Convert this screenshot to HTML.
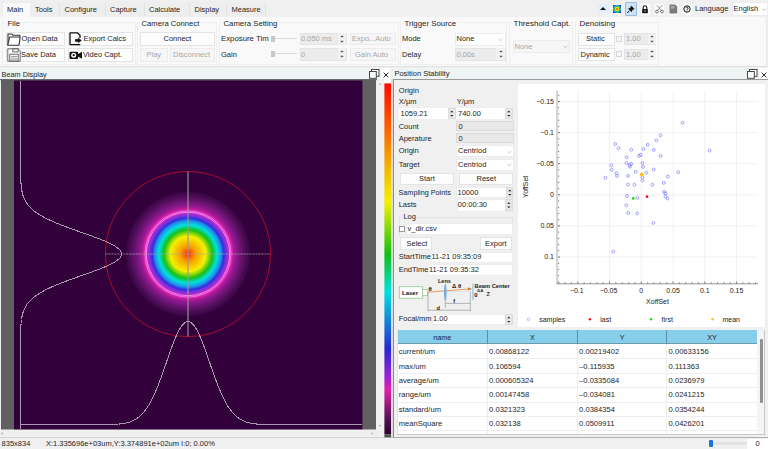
<!DOCTYPE html>
<html><head><meta charset="utf-8">
<style>
svg text{font-family:"Liberation Sans",sans-serif}
*{margin:0;padding:0;box-sizing:border-box}
html,body{width:768px;height:449px;overflow:hidden;background:#f0f0f0;font-family:"Liberation Sans",sans-serif;color:#1e1e1e}
.a{position:absolute}
.t{position:absolute;white-space:nowrap;line-height:10px;height:10px;font-size:7.5px;margin-top:-0.4px}
.btn{position:absolute;background:#fdfdfd;border:1px solid #e4e4e4}
.dis{color:#a8a8a8}
.grp{position:absolute;border:1px solid #efefef;background:#f9f9f9}
.spin{position:absolute;background:#ececec;border:1px solid #e4e4e4}
.inp{position:absolute;background:#fff;border:1px solid #e2e2e2}
.sb{position:absolute;right:0;top:0;bottom:0;width:8px;border-left:1px solid #e0e0e0;background:#f0f0f0}
</style></head><body>
<!-- tab bar -->
<div class="a" style="left:0;top:0;width:768px;height:17px;background:#f0f0f0"></div>
<div class="a" style="left:2px;top:2px;width:28.5px;height:16px;background:#f9f9f9;border:1px solid #ececec;border-bottom:none"></div>
<div class="a" style="left:30px;top:2px;width:236px;height:15px;background:#eeeeee"></div>
<div class="a" style="left:59px;top:3px;width:1px;height:13px;background:#e2e2e2"></div>
<div class="a" style="left:105px;top:3px;width:1px;height:13px;background:#e2e2e2"></div>
<div class="a" style="left:144px;top:3px;width:1px;height:13px;background:#e2e2e2"></div>
<div class="a" style="left:189px;top:3px;width:1px;height:13px;background:#e2e2e2"></div>
<div class="a" style="left:226px;top:3px;width:1px;height:13px;background:#e2e2e2"></div>
<div class="a" style="left:265px;top:3px;width:1px;height:13px;background:#e2e2e2"></div>
<div class="t" style="left:7px;top:5.5px">Main</div>
<div class="t" style="left:35px;top:5.5px">Tools</div>
<div class="t" style="left:64.5px;top:5.5px">Configure</div>
<div class="t" style="left:110px;top:5.5px">Capture</div>
<div class="t" style="left:149px;top:5.5px">Calculate</div>
<div class="t" style="left:194.5px;top:5.5px">Display</div>
<div class="t" style="left:231.5px;top:5.5px">Measure</div>

<!-- ribbon -->
<div class="a" style="left:0;top:17px;width:767px;height:50px;background:#f9f9f9;border-right:1px solid #e8e8e8;border-bottom:1px solid #e0e0e0"></div>

<!-- File group -->
<div class="grp" style="left:2px;top:22px;width:134px;height:43px"></div>
<div class="a" style="left:5px;top:19px;width:18px;height:8px;background:#f9f9f9"></div>
<div class="t" style="left:7.5px;top:19px;font-size:7.8px">File</div>
<div class="btn" style="left:5.5px;top:31.5px;width:59px;height:14.5px"></div>
<div class="btn" style="left:5.5px;top:47.5px;width:59px;height:14.5px"></div>
<div class="btn" style="left:67.5px;top:31.5px;width:65px;height:14.5px"></div>
<div class="btn" style="left:67.5px;top:47.5px;width:65px;height:14.5px"></div>
<svg class="a" style="left:6.5px;top:32.5px" width="14" height="13" viewBox="0 0 14 13">
<path d="M1 12 L1 1 L4.8 1 L5.8 2.2 L12.8 2.2 L12.8 3.8" fill="none" stroke="#333" stroke-width="1.1" stroke-linejoin="round"/>
<path d="M0.8 12.2 L2.6 4 L13.2 4 L12 12.2 Z" fill="#fff" stroke="#333" stroke-width="1.1" stroke-linejoin="round"/>
</svg>
<svg class="a" style="left:6.5px;top:47.5px" width="14" height="14" viewBox="0 0 14 14">
<path d="M0.8 0.8 L11.2 0.8 L13.2 2.8 L13.2 13.2 L0.8 13.2 Z" fill="#fff" stroke="#6a6a6a" stroke-width="1"/>
<rect x="5.8" y="0.8" width="5.4" height="3" fill="none" stroke="#6a6a6a" stroke-width="1"/>
<rect x="2.8" y="6.2" width="8.4" height="7" fill="none" stroke="#6a6a6a" stroke-width="1"/>
<rect x="3.8" y="8" width="6.4" height="1.3" fill="#a0a0a0"/>
<rect x="3.8" y="10.4" width="6.4" height="1.3" fill="#a0a0a0"/>
</svg>
<div class="t" style="left:21.5px;top:34.7px">Open Data</div>
<div class="t" style="left:21px;top:50.3px">Save Data</div>
<svg class="a" style="left:68.5px;top:32px" width="14" height="14" viewBox="0 0 14 14">
<path d="M11 6 L11 3.3 L8.3 0.8 L1.6 0.8 Q1 0.8 1 1.4 L1 12 Q1 12.6 1.6 12.6 L11.3 12.6" fill="none" stroke="#111" stroke-width="1.3" stroke-linejoin="round"/>
<path d="M6.3 7.3 L9.3 7.3 L9.3 6 L12.4 8.4 L9.3 10.8 L9.3 9.5 L6.3 9.5 Z" fill="#111" stroke="#111" stroke-width="0.5"/>
</svg>
<svg class="a" style="left:68.5px;top:50.5px" width="14" height="9" viewBox="0 0 14 9">
<rect x="0.5" y="0.7" width="8.6" height="7.2" rx="1" fill="#111"/>
<path d="M8.8 3.2 L13 0.8 L13 7.8 L8.8 5.4 Z" fill="#111"/>
<circle cx="4.7" cy="4.2" r="2.5" fill="#fff"/>
<circle cx="4.7" cy="4.2" r="1.1" fill="#111"/>
</svg>
<div class="t" style="left:83.5px;top:34.7px">Export Calcs</div>
<div class="t" style="left:83px;top:50.3px">Video Capt.</div>

<!-- Camera Connect -->
<div class="grp" style="left:137px;top:22px;width:80px;height:43px"></div>
<div class="a" style="left:139px;top:19px;width:62px;height:8px;background:#f9f9f9"></div>
<div class="t" style="left:141.5px;top:19px;font-size:7.65px">Camera Connect</div>
<div class="btn" style="left:139.5px;top:31.5px;width:75px;height:14px"></div>
<div class="t" style="left:163.5px;top:34.7px">Connect</div>
<div class="btn" style="left:139.5px;top:47.5px;width:28.5px;height:14.5px;background:#f6f6f6;border-color:#ececec"></div>
<div class="btn" style="left:169.5px;top:47.5px;width:45px;height:14.5px;background:#f6f6f6;border-color:#ececec"></div>
<div class="t dis" style="left:146.5px;top:50.3px">Play</div>
<div class="t dis" style="left:173px;top:50.3px">Disconnect</div>

<!-- Camera Setting -->
<div class="grp" style="left:219px;top:22px;width:180px;height:43px"></div>
<div class="a" style="left:221px;top:19px;width:58px;height:8px;background:#f9f9f9"></div>
<div class="t" style="left:223.5px;top:19px;font-size:7.75px">Camera Setting</div>
<div class="t" style="left:221px;top:34.4px;font-size:7.8px">Exposure Tim</div>
<div class="t" style="left:221px;top:50.3px">Gain</div>
<div class="a" style="left:275px;top:38px;width:22px;height:1px;background:#dadada"></div>
<div class="a" style="left:270.5px;top:35.5px;width:4.5px;height:6.5px;background:#c8c8c8"></div>
<div class="a" style="left:275px;top:53px;width:22px;height:1px;background:#dadada"></div>
<div class="a" style="left:270.5px;top:50.5px;width:4.5px;height:6.5px;background:#c8c8c8"></div>
<div class="spin" style="left:299.5px;top:32.5px;width:47px;height:12.5px"></div>
<div class="a" style="left:338px;top:33px;width:8px;height:11.5px;background:#f2f2f2"></div>
<div class="spin" style="left:299.5px;top:47.5px;width:47px;height:13px"></div>
<div class="a" style="left:338px;top:48px;width:8px;height:12px;background:#f2f2f2"></div>
<div class="t dis" style="left:301px;top:34.7px">0.050 ms</div>
<div class="t dis" style="left:301px;top:50.3px">0</div>
<div class="btn" style="left:349.5px;top:32.5px;width:46.5px;height:12.5px;background:#f6f6f6;border-color:#ececec"></div>
<div class="btn" style="left:349.5px;top:47.5px;width:46.5px;height:13px;background:#f6f6f6;border-color:#ececec"></div>
<div class="t dis" style="left:352px;top:34.7px">Expo...Auto</div>
<div class="t dis" style="left:355px;top:50.3px">Gain Auto</div>

<!-- Trigger Source -->
<div class="grp" style="left:400px;top:22px;width:107px;height:43px"></div>
<div class="a" style="left:402px;top:19px;width:58px;height:8px;background:#f9f9f9"></div>
<div class="t" style="left:404.5px;top:19px;font-size:7.85px">Trigger Source</div>
<div class="t" style="left:402px;top:34.7px">Mode</div>
<div class="t" style="left:402px;top:50.3px">Delay</div>
<div class="inp" style="left:454.5px;top:32.5px;width:51px;height:13px;border-color:#ececec"></div>
<div class="t" style="left:456.5px;top:34.7px">None</div>
<div class="spin" style="left:454.5px;top:47.5px;width:51px;height:13px"></div>
<div class="a" style="left:496px;top:48px;width:9px;height:12px;background:#f2f2f2"></div>
<div class="t dis" style="left:456.5px;top:50.3px">0.00s</div>

<!-- Threshold Capt -->
<div class="grp" style="left:508.5px;top:22px;width:64px;height:43px"></div>
<div class="a" style="left:511px;top:19px;width:60px;height:8px;background:#f9f9f9"></div>
<div class="t" style="left:513.5px;top:19px;font-size:8.0px">Threshold Capt.</div>
<div class="btn" style="left:512.5px;top:40px;width:57px;height:13px;background:#f6f6f6;border-color:#ececec"></div>
<div class="t dis" style="left:514.5px;top:42.2px">None</div>

<!-- Denoising -->
<div class="grp" style="left:574.5px;top:22px;width:84.5px;height:43px"></div>
<div class="a" style="left:577px;top:19px;width:40px;height:8px;background:#f9f9f9"></div>
<div class="t" style="left:579.5px;top:19px;font-size:8.0px">Denoising</div>
<div class="btn" style="left:577.5px;top:32.5px;width:37px;height:13px"></div>
<div class="btn" style="left:577.5px;top:47.5px;width:37px;height:13px"></div>
<div class="t" style="left:586px;top:34.7px">Static</div>
<div class="t" style="left:580.5px;top:50.3px">Dynamic</div>
<div class="a" style="left:616px;top:36px;width:6px;height:6px;border:1px solid #d8d8d8;background:#f6f6f6"></div>
<div class="a" style="left:616px;top:51px;width:6px;height:6px;border:1px solid #d8d8d8;background:#f6f6f6"></div>
<div class="spin" style="left:624px;top:33px;width:32px;height:11.5px"></div>
<div class="spin" style="left:624px;top:48.5px;width:32px;height:11.5px"></div>
<div class="a" style="left:648px;top:33.5px;width:7.5px;height:10.5px;background:#f2f2f2"></div>
<div class="a" style="left:648px;top:49px;width:7.5px;height:10.5px;background:#f2f2f2"></div>
<div class="t dis" style="left:626px;top:34.7px">1.00</div>
<div class="t dis" style="left:626px;top:50.3px">1.00</div>

<!-- tab row icons -->
<div class="a" style="left:597.5px;top:3.8px;width:11.2px;height:9.6px;background:#e3eefa"></div>
<div class="a" style="left:600px;top:6.6px;width:0;height:0;border-left:3.2px solid transparent;border-right:3.2px solid transparent;border-bottom:3.4px solid #111"></div>
<div class="a" style="left:612px;top:2.5px;width:10px;height:13px;background:#fdfdfd;border:1px solid #f0f0f0"></div>
<div class="a" style="left:613.3px;top:5.3px;width:7.5px;height:7.5px;background:radial-gradient(circle at 50% 50%,#ff4000 0,#ff9000 18%,#e8e800 30%,#40c040 45%,#20c0e0 60%,#2050e0 75%,#1830c8 100%)"></div>
<div class="a" style="left:625px;top:2px;width:11.7px;height:13.5px;background:#cfe3f7;border:1px solid #94bce2;border-radius:1px"></div>
<svg class="a" style="left:626px;top:4px" width="10" height="10" viewBox="0 0 10 10"><path d="M5.2 1.6 L8.6 5 L7.4 5.4 L6 6.8 L5.8 8.2 L2 4.4 L3.4 4.2 L4.8 2.8 Z" fill="#1a1a1a"/><path d="M1.2 9 L3.8 6.4" stroke="#1a1a1a" stroke-width="1"/></svg>
<div class="a" style="left:639.5px;top:2.5px;width:11px;height:13px;background:#fdfdfd;border:1px solid #f0f0f0"></div>
<svg class="a" style="left:641px;top:4.5px" width="8" height="9" viewBox="0 0 8 9"><path d="M2.2 4 L2.2 2.6 A1.8 1.8 0 0 1 5.8 2.6 L5.8 4" fill="none" stroke="#111" stroke-width="1.1"/><rect x="1.2" y="4" width="5.6" height="4.2" fill="#111"/><rect x="3.6" y="5.3" width="0.8" height="1.6" fill="#fff"/></svg>
<div class="a" style="left:653.5px;top:2.5px;width:11px;height:13px;background:#fdfdfd;border:1px solid #f0f0f0"></div>
<svg class="a" style="left:654.5px;top:4px" width="9" height="10" viewBox="0 0 9 10"><path d="M1.8 1.2 L6.8 6.6 M7.2 1.2 L2.2 6.6" stroke="#888" stroke-width="0.9"/><circle cx="2" cy="7.6" r="1.4" fill="none" stroke="#666" stroke-width="0.9"/><circle cx="7" cy="7.6" r="1.4" fill="none" stroke="#666" stroke-width="0.9"/></svg>
<div class="a" style="left:667.5px;top:2.5px;width:11px;height:13px;background:#fdfdfd;border:1px solid #f0f0f0"></div>
<svg class="a" style="left:669px;top:4px" width="9" height="10" viewBox="0 0 9 10"><path d="M0.5 0.5 L6.3 0.5 L8.2 2.4 L8.2 9.6 L0.5 9.6 Z" fill="#7a7a7a"/><path d="M2 2 L5.5 2 L5.5 4.6 L2 4.6 Z" fill="#a8a8a8"/></svg>
<div class="a" style="left:681.5px;top:2.5px;width:11px;height:13px;background:#fdfdfd;border:1px solid #f0f0f0"></div>
<svg class="a" style="left:682.8px;top:5.2px" width="8" height="8" viewBox="0 0 8 8"><circle cx="4" cy="4" r="3.2" fill="none" stroke="#111" stroke-width="1"/><path d="M2.9 3.2 A1.1 1.1 0 1 1 4 4.3 L4 4.9" fill="none" stroke="#111" stroke-width="0.8"/><rect x="3.6" y="5.5" width="0.8" height="0.8" fill="#111"/></svg>
<div class="t" style="left:695px;top:4.6px">Language</div>
<div class="inp" style="left:731.5px;top:2px;width:36px;height:14px;border-color:#ececec"></div>
<div class="t" style="left:733.5px;top:4.6px">English</div>
<svg class="a" style="left:762px;top:8px" width="4" height="3" viewBox="0 0 4 3"><path d="M0.3 0.5 L2 2.3 L3.7 0.5" fill="none" stroke="#999" stroke-width="0.6"/></svg>

<!-- Beam display dock -->
<div class="a" style="left:0;top:68px;width:392px;height:11px;background:#eef4f4"></div>
<div class="t" style="left:1.6px;top:69.9px;font-size:7.3px">Beam Display</div>
<svg class="a" style="left:369px;top:69px" width="11" height="10" viewBox="0 0 11 10">
<rect x="2.5" y="0.5" width="7.5" height="6.8" fill="#fff" stroke="#444" stroke-width="1"/>
<rect x="0.5" y="2.5" width="6.8" height="6.8" fill="#fff" stroke="#444" stroke-width="1"/>
</svg>
<div class="a" style="left:380.5px;top:68.3px;width:9.5px;height:10.5px;background:#fff"></div>
<svg class="a" style="left:382.5px;top:71.5px" width="6" height="6" viewBox="0 0 6 6"><path d="M0.6 0.6 L5.4 5.4 M5.4 0.6 L0.6 5.4" stroke="#111" stroke-width="0.9"/></svg>
<svg class="a" style="left:0;top:79px" width="393" height="359" viewBox="0 79 393 359">
<defs>
<linearGradient id="cb" x1="0" y1="83.4" x2="0" y2="434.4" gradientUnits="userSpaceOnUse">
<stop offset="0" stop-color="#ff0800"/>
<stop offset="0.105" stop-color="#ff5000"/>
<stop offset="0.245" stop-color="#f2b800"/>
<stop offset="0.338" stop-color="#f6f000"/>
<stop offset="0.486" stop-color="#10c010"/>
<stop offset="0.594" stop-color="#00e0e0"/>
<stop offset="0.757" stop-color="#2828d0"/>
<stop offset="0.839" stop-color="#a020d8"/>
<stop offset="0.873" stop-color="#e020a8"/>
<stop offset="0.957" stop-color="#501050"/>
<stop offset="1" stop-color="#2c002c"/>
</linearGradient>
<radialGradient id="beam" cx="188" cy="254" r="62" gradientUnits="userSpaceOnUse">
<stop offset="0" stop-color="#ff2800"/>
<stop offset="0.126" stop-color="#f8a000"/>
<stop offset="0.284" stop-color="#f6f000"/>
<stop offset="0.39" stop-color="#18c018"/>
<stop offset="0.47" stop-color="#00e0e0"/>
<stop offset="0.535" stop-color="#2090e8"/>
<stop offset="0.577" stop-color="#3030e0"/>
<stop offset="0.63" stop-color="#9030d8"/>
<stop offset="0.672" stop-color="#d020c0"/>
<stop offset="0.70" stop-color="#e028c0"/>
<stop offset="0.742" stop-color="#b01890"/>
<stop offset="0.774" stop-color="#901a90"/>
<stop offset="0.84" stop-color="#701478"/>
<stop offset="0.90" stop-color="#581060"/>
<stop offset="0.95" stop-color="#460a50"/>
<stop offset="1" stop-color="#3c0646"/>
</radialGradient>
</defs>
<rect x="0" y="79" width="393" height="359" fill="#f0f0f0"/>
<rect x="0" y="79" width="377" height="1.2" fill="#6a6a6a"/>
<rect x="1" y="80" width="375" height="349.5" fill="#606060"/>
<rect x="14" y="80.5" width="348.4" height="348.8" fill="#32003a"/>
<circle cx="188" cy="254" r="62" fill="url(#beam)"/>
<circle cx="188" cy="254" r="41.7" fill="none" stroke="#ffb8ff" stroke-width="0.7"/>
<circle cx="188" cy="254" r="43" fill="none" stroke="#ffa8f0" stroke-width="0.6"/>
<circle cx="188" cy="254" r="82.5" fill="none" stroke="#b0102c" stroke-width="0.9"/>
<line x1="188" y1="171.5" x2="188" y2="336.5" stroke="#9a9a9a" stroke-opacity="0.85" stroke-width="1.3"/>
<line x1="105.5" y1="254" x2="270.5" y2="254" stroke="#a8a8a8" stroke-opacity="0.85" stroke-width="0.9" stroke-dasharray="2,1"/>
<path d="M20.5,80.5 L20.5,81.5 L20.5,82.5 L20.5,83.5 L20.5,84.5 L20.5,85.5 L20.5,86.5 L20.5,87.5 L20.5,88.5 L20.5,89.5 L20.5,90.5 L20.5,91.5 L20.5,92.5 L20.5,93.5 L20.5,94.5 L20.5,95.5 L20.5,96.5 L20.5,97.5 L20.5,98.5 L20.5,99.5 L20.5,100.5 L20.5,101.5 L20.5,102.5 L20.5,103.5 L20.5,104.5 L20.5,105.5 L20.5,106.5 L20.5,107.5 L20.5,108.5 L20.5,109.5 L20.5,110.5 L20.5,111.5 L20.5,112.5 L20.5,113.5 L20.5,114.5 L20.5,115.5 L20.5,116.5 L20.5,117.5 L20.5,118.5 L20.5,119.5 L20.5,120.5 L20.5,121.5 L20.5,122.5 L20.5,123.5 L20.5,124.5 L20.5,125.5 L20.5,126.5 L20.5,127.5 L20.5,128.5 L20.5,129.5 L20.5,130.5 L20.5,131.5 L20.5,132.5 L20.5,133.5 L20.5,134.5 L20.5,135.5 L20.5,136.5 L20.5,137.5 L20.5,138.5 L20.5,139.5 L20.5,140.5 L20.5,141.5 L20.5,142.5 L20.5,143.5 L20.5,144.5 L20.5,145.5 L20.5,146.5 L20.5,147.5 L20.5,148.5 L20.5,149.5 L20.5,150.5 L20.5,151.5 L20.5,152.5 L20.5,153.5 L20.5,154.5 L20.5,155.5 L20.5,156.5 L20.5,157.5 L20.5,158.5 L20.5,159.5 L20.5,160.5 L20.5,161.5 L20.5,162.5 L20.5,163.5 L20.5,164.5 L20.5,165.5 L20.5,166.5 L20.5,167.5 L20.5,168.5 L20.5,169.5 L20.6,170.5 L20.6,171.5 L20.6,172.5 L20.6,173.5 L20.6,174.5 L20.6,175.5 L20.7,176.5 L20.7,177.5 L20.7,178.5 L20.7,179.5 L20.8,180.5 L20.8,181.5 L20.9,182.5 L21.0,183.5 L21.0,184.5 L21.1,185.5 L21.2,186.5 L21.3,187.5 L21.5,188.5 L21.6,189.5 L21.8,190.5 L22.0,191.5 L22.2,192.5 L22.4,193.5 L22.7,194.5 L23.0,195.5 L23.3,196.5 L23.7,197.5 L24.1,198.5 L24.6,199.5 L25.1,200.5 L25.6,201.5 L26.2,202.5 L26.9,203.5 L27.6,204.5 L28.4,205.5 L29.3,206.5 L30.2,207.5 L31.3,208.5 L32.4,209.5 L33.5,210.5 L34.8,211.5 L36.2,212.5 L37.6,213.5 L39.2,214.5 L40.8,215.5 L42.6,216.5 L44.4,217.5 L46.3,218.5 L48.4,219.5 L50.5,220.5 L52.7,221.5 L55.0,222.5 L57.4,223.5 L59.9,224.5 L62.5,225.5 L65.1,226.5 L67.8,227.5 L70.5,228.5 L73.3,229.5 L76.1,230.5 L78.9,231.5 L81.8,232.5 L84.6,233.5 L87.4,234.5 L90.3,235.5 L93.0,236.5 L95.7,237.5 L98.4,238.5 L101.0,239.5 L103.4,240.5 L105.8,241.5 L108.0,242.5 L110.1,243.5 L112.1,244.5 L113.9,245.5 L115.5,246.5 L117.0,247.5 L118.2,248.5 L119.3,249.5 L120.2,250.5 L120.8,251.5 L121.3,252.5 L121.5,253.5 L121.5,254.5 L121.3,255.5 L120.8,256.5 L120.2,257.5 L119.3,258.5 L118.2,259.5 L117.0,260.5 L115.5,261.5 L113.9,262.5 L112.1,263.5 L110.1,264.5 L108.0,265.5 L105.8,266.5 L103.4,267.5 L101.0,268.5 L98.4,269.5 L95.7,270.5 L93.0,271.5 L90.3,272.5 L87.4,273.5 L84.6,274.5 L81.8,275.5 L78.9,276.5 L76.1,277.5 L73.3,278.5 L70.5,279.5 L67.8,280.5 L65.1,281.5 L62.5,282.5 L59.9,283.5 L57.4,284.5 L55.0,285.5 L52.7,286.5 L50.5,287.5 L48.4,288.5 L46.3,289.5 L44.4,290.5 L42.6,291.5 L40.8,292.5 L39.2,293.5 L37.6,294.5 L36.2,295.5 L34.8,296.5 L33.5,297.5 L32.4,298.5 L31.3,299.5 L30.2,300.5 L29.3,301.5 L28.4,302.5 L27.6,303.5 L26.9,304.5 L26.2,305.5 L25.6,306.5 L25.1,307.5 L24.6,308.5 L24.1,309.5 L23.7,310.5 L23.3,311.5 L23.0,312.5 L22.7,313.5 L22.4,314.5 L22.2,315.5 L22.0,316.5 L21.8,317.5 L21.6,318.5 L21.5,319.5 L21.3,320.5 L21.2,321.5 L21.1,322.5 L21.0,323.5 L21.0,324.5 L20.9,325.5 L20.8,326.5 L20.8,327.5 L20.7,328.5 L20.7,329.5 L20.7,330.5 L20.7,331.5 L20.6,332.5 L20.6,333.5 L20.6,334.5 L20.6,335.5 L20.6,336.5 L20.6,337.5 L20.5,338.5 L20.5,339.5 L20.5,340.5 L20.5,341.5 L20.5,342.5 L20.5,343.5 L20.5,344.5 L20.5,345.5 L20.5,346.5 L20.5,347.5 L20.5,348.5 L20.5,349.5 L20.5,350.5 L20.5,351.5 L20.5,352.5 L20.5,353.5 L20.5,354.5 L20.5,355.5 L20.5,356.5 L20.5,357.5 L20.5,358.5 L20.5,359.5 L20.5,360.5 L20.5,361.5 L20.5,362.5 L20.5,363.5 L20.5,364.5 L20.5,365.5 L20.5,366.5 L20.5,367.5 L20.5,368.5 L20.5,369.5 L20.5,370.5 L20.5,371.5 L20.5,372.5 L20.5,373.5 L20.5,374.5 L20.5,375.5 L20.5,376.5 L20.5,377.5 L20.5,378.5 L20.5,379.5 L20.5,380.5 L20.5,381.5 L20.5,382.5 L20.5,383.5 L20.5,384.5 L20.5,385.5 L20.5,386.5 L20.5,387.5 L20.5,388.5 L20.5,389.5 L20.5,390.5 L20.5,391.5 L20.5,392.5 L20.5,393.5 L20.5,394.5 L20.5,395.5 L20.5,396.5 L20.5,397.5 L20.5,398.5 L20.5,399.5 L20.5,400.5 L20.5,401.5 L20.5,402.5 L20.5,403.5 L20.5,404.5 L20.5,405.5 L20.5,406.5 L20.5,407.5 L20.5,408.5 L20.5,409.5 L20.5,410.5 L20.5,411.5 L20.5,412.5 L20.5,413.5 L20.5,414.5 L20.5,415.5 L20.5,416.5 L20.5,417.5 L20.5,418.5 L20.5,419.5 L20.5,420.5 L20.5,421.5 L20.5,422.5 L20.5,423.5 L20.5,424.5 L20.5,425.5 L20.5,426.5 L20.5,427.5 L20.5,428.5" fill="none" stroke="#a898b0" stroke-width="1" shape-rendering="crispEdges"/>
<path d="M20.5,424.6 L21.5,424.6 L22.5,424.6 L23.5,424.6 L24.5,424.6 L25.5,424.6 L26.5,424.6 L27.5,424.6 L28.5,424.6 L29.5,424.6 L30.5,424.6 L31.5,424.6 L32.5,424.6 L33.5,424.6 L34.5,424.6 L35.5,424.6 L36.5,424.6 L37.5,424.6 L38.5,424.6 L39.5,424.6 L40.5,424.6 L41.5,424.6 L42.5,424.6 L43.5,424.6 L44.5,424.6 L45.5,424.6 L46.5,424.6 L47.5,424.6 L48.5,424.6 L49.5,424.6 L50.5,424.6 L51.5,424.6 L52.5,424.6 L53.5,424.6 L54.5,424.6 L55.5,424.6 L56.5,424.6 L57.5,424.6 L58.5,424.6 L59.5,424.6 L60.5,424.6 L61.5,424.6 L62.5,424.6 L63.5,424.6 L64.5,424.6 L65.5,424.6 L66.5,424.6 L67.5,424.6 L68.5,424.6 L69.5,424.6 L70.5,424.6 L71.5,424.6 L72.5,424.6 L73.5,424.6 L74.5,424.6 L75.5,424.6 L76.5,424.6 L77.5,424.6 L78.5,424.6 L79.5,424.6 L80.5,424.6 L81.5,424.6 L82.5,424.6 L83.5,424.6 L84.5,424.6 L85.5,424.6 L86.5,424.6 L87.5,424.6 L88.5,424.6 L89.5,424.6 L90.5,424.6 L91.5,424.6 L92.5,424.6 L93.5,424.6 L94.5,424.6 L95.5,424.6 L96.5,424.6 L97.5,424.6 L98.5,424.6 L99.5,424.6 L100.5,424.6 L101.5,424.6 L102.5,424.6 L103.5,424.6 L104.5,424.5 L105.5,424.5 L106.5,424.5 L107.5,424.5 L108.5,424.5 L109.5,424.5 L110.5,424.4 L111.5,424.4 L112.5,424.4 L113.5,424.3 L114.5,424.3 L115.5,424.3 L116.5,424.2 L117.5,424.1 L118.5,424.0 L119.5,424.0 L120.5,423.9 L121.5,423.7 L122.5,423.6 L123.5,423.5 L124.5,423.3 L125.5,423.1 L126.5,422.9 L127.5,422.6 L128.5,422.4 L129.5,422.1 L130.5,421.7 L131.5,421.3 L132.5,420.9 L133.5,420.5 L134.5,419.9 L135.5,419.4 L136.5,418.8 L137.5,418.1 L138.5,417.3 L139.5,416.5 L140.5,415.6 L141.5,414.7 L142.5,413.6 L143.5,412.5 L144.5,411.3 L145.5,410.0 L146.5,408.6 L147.5,407.1 L148.5,405.6 L149.5,403.9 L150.5,402.1 L151.5,400.2 L152.5,398.2 L153.5,396.2 L154.5,394.0 L155.5,391.7 L156.5,389.4 L157.5,386.9 L158.5,384.4 L159.5,381.8 L160.5,379.1 L161.5,376.4 L162.5,373.6 L163.5,370.8 L164.5,367.9 L165.5,365.0 L166.5,362.1 L167.5,359.2 L168.5,356.3 L169.5,353.5 L170.5,350.6 L171.5,347.9 L172.5,345.2 L173.5,342.6 L174.5,340.0 L175.5,337.6 L176.5,335.3 L177.5,333.2 L178.5,331.2 L179.5,329.3 L180.5,327.7 L181.5,326.2 L182.5,324.9 L183.5,323.8 L184.5,323.0 L185.5,322.3 L186.5,321.9 L187.5,321.6 L188.5,321.6 L189.5,321.9 L190.5,322.3 L191.5,323.0 L192.5,323.8 L193.5,324.9 L194.5,326.2 L195.5,327.7 L196.5,329.3 L197.5,331.2 L198.5,333.2 L199.5,335.3 L200.5,337.6 L201.5,340.0 L202.5,342.6 L203.5,345.2 L204.5,347.9 L205.5,350.6 L206.5,353.5 L207.5,356.3 L208.5,359.2 L209.5,362.1 L210.5,365.0 L211.5,367.9 L212.5,370.8 L213.5,373.6 L214.5,376.4 L215.5,379.1 L216.5,381.8 L217.5,384.4 L218.5,386.9 L219.5,389.4 L220.5,391.7 L221.5,394.0 L222.5,396.2 L223.5,398.2 L224.5,400.2 L225.5,402.1 L226.5,403.9 L227.5,405.6 L228.5,407.1 L229.5,408.6 L230.5,410.0 L231.5,411.3 L232.5,412.5 L233.5,413.6 L234.5,414.7 L235.5,415.6 L236.5,416.5 L237.5,417.3 L238.5,418.1 L239.5,418.8 L240.5,419.4 L241.5,419.9 L242.5,420.5 L243.5,420.9 L244.5,421.3 L245.5,421.7 L246.5,422.1 L247.5,422.4 L248.5,422.6 L249.5,422.9 L250.5,423.1 L251.5,423.3 L252.5,423.5 L253.5,423.6 L254.5,423.7 L255.5,423.9 L256.5,424.0 L257.5,424.0 L258.5,424.1 L259.5,424.2 L260.5,424.3 L261.5,424.3 L262.5,424.3 L263.5,424.4 L264.5,424.4 L265.5,424.4 L266.5,424.5 L267.5,424.5 L268.5,424.5 L269.5,424.5 L270.5,424.5 L271.5,424.5 L272.5,424.6 L273.5,424.6 L274.5,424.6 L275.5,424.6 L276.5,424.6 L277.5,424.6 L278.5,424.6 L279.5,424.6 L280.5,424.6 L281.5,424.6 L282.5,424.6 L283.5,424.6 L284.5,424.6 L285.5,424.6 L286.5,424.6 L287.5,424.6 L288.5,424.6 L289.5,424.6 L290.5,424.6 L291.5,424.6 L292.5,424.6 L293.5,424.6 L294.5,424.6 L295.5,424.6 L296.5,424.6 L297.5,424.6 L298.5,424.6 L299.5,424.6 L300.5,424.6 L301.5,424.6 L302.5,424.6 L303.5,424.6 L304.5,424.6 L305.5,424.6 L306.5,424.6 L307.5,424.6 L308.5,424.6 L309.5,424.6 L310.5,424.6 L311.5,424.6 L312.5,424.6 L313.5,424.6 L314.5,424.6 L315.5,424.6 L316.5,424.6 L317.5,424.6 L318.5,424.6 L319.5,424.6 L320.5,424.6 L321.5,424.6 L322.5,424.6 L323.5,424.6 L324.5,424.6 L325.5,424.6 L326.5,424.6 L327.5,424.6 L328.5,424.6 L329.5,424.6 L330.5,424.6 L331.5,424.6 L332.5,424.6 L333.5,424.6 L334.5,424.6 L335.5,424.6 L336.5,424.6 L337.5,424.6 L338.5,424.6 L339.5,424.6 L340.5,424.6 L341.5,424.6 L342.5,424.6 L343.5,424.6 L344.5,424.6 L345.5,424.6 L346.5,424.6 L347.5,424.6 L348.5,424.6 L349.5,424.6 L350.5,424.6 L351.5,424.6 L352.5,424.6 L353.5,424.6 L354.5,424.6 L355.5,424.6 L356.5,424.6 L357.5,424.6 L358.5,424.6 L359.5,424.6 L360.5,424.6 L361.5,424.6" fill="none" stroke="#a898b0" stroke-width="1" shape-rendering="crispEdges"/>
<path d="M376 429.5 L376 437.5" stroke="#e4e4e4"/>
<path d="M378.6 84.6 L380 83.2 L381.4 84.6 Z" fill="#999"/>
<path d="M378.6 425.2 L380 426.6 L381.4 425.2 Z" fill="#999"/>
<path d="M2.6 432 L1.2 433.4 L2.6 434.8 Z" fill="#999"/>
<path d="M371.6 432 L373 433.4 L371.6 434.8 Z" fill="#999"/>
<rect x="384" y="79.7" width="7" height="3.7" fill="#fff"/>
<rect x="384.4" y="83.4" width="6.6" height="351" fill="url(#cb)"/>
<rect x="384.4" y="434.4" width="6.6" height="3.3" fill="#505050"/>
<rect x="391" y="79" width="2" height="359" fill="#dcdcdc"/>
<rect x="0" y="437.5" width="393" height="0.8" fill="#b8b8b8"/>
</svg>

<!-- Position Stability dock -->
<div class="a" style="left:393.4px;top:68px;width:374.6px;height:11px;background:#eef4f4"></div>
<div class="t" style="left:394.4px;top:69.8px">Position Stability</div>
<svg class="a" style="left:747px;top:69px" width="11" height="10" viewBox="0 0 11 10">
<rect x="2.5" y="0.5" width="7.5" height="6.8" fill="#fff" stroke="#444" stroke-width="1"/>
<rect x="0.5" y="2.5" width="6.8" height="6.8" fill="#fff" stroke="#444" stroke-width="1"/>
</svg>
<div class="a" style="left:758.5px;top:68.3px;width:9.5px;height:10.5px;background:#fff"></div>
<svg class="a" style="left:760.5px;top:71.5px" width="6" height="6" viewBox="0 0 6 6"><path d="M0.6 0.6 L5.4 5.4 M5.4 0.6 L0.6 5.4" stroke="#111" stroke-width="0.9"/></svg>
<div class="a" style="left:393px;top:79px;width:375px;height:359px;background:#f0f0f0;border-left:1px solid #8c8c8c;border-top:1px solid #9a9a9a;border-bottom:1px solid #b0b0b0"></div>

<div class="t" style="left:398.8px;top:86.6px">Origin</div>
<div class="t" style="left:398.8px;top:97.4px">X/&#956;m</div>
<div class="t" style="left:456.7px;top:97.4px">Y/&#956;m</div>
<div class="inp" style="left:398.8px;top:107.8px;width:56px;height:11.6px;border-color:#fff"></div>
<div class="a" style="left:448.0px;top:108.00px;width:7.6px;height:11.20px;background:#e6e6e6;border:1px solid #dcdcdc"></div><svg class="a" style="left:448.0px;top:108.00px" width="8" height="11.20" viewBox="0 0 8 11.20"><path d="M2.1 4.30 L3.8 2.70 L5.5 4.30 Z M2.1 6.90 L3.8 8.50 L5.5 6.90 Z" fill="#1a1a1a"/></svg>
<div class="t" style="left:400.5px;top:109.4px">1059.21</div>
<div class="inp" style="left:456.2px;top:107.8px;width:56.5px;height:11.6px;border-color:#fff"></div>
<div class="a" style="left:505.0px;top:108.00px;width:7.6px;height:11.20px;background:#e6e6e6;border:1px solid #dcdcdc"></div><svg class="a" style="left:505.0px;top:108.00px" width="8" height="11.20" viewBox="0 0 8 11.20"><path d="M2.1 4.30 L3.8 2.70 L5.5 4.30 Z M2.1 6.90 L3.8 8.50 L5.5 6.90 Z" fill="#1a1a1a"/></svg>
<div class="t" style="left:458px;top:109.4px">740.00</div>

<div class="t" style="left:398.7px;top:121.9px">Count</div>
<div class="a" style="left:456.2px;top:121px;width:57.4px;height:10.2px;background:#e8e8e8;border:1px solid #dadada"></div>
<div class="t" style="left:458.5px;top:121.9px">0</div>
<div class="t" style="left:398.7px;top:133.9px">Aperature</div>
<div class="a" style="left:456.2px;top:132.8px;width:57.4px;height:10.4px;background:#e8e8e8;border:1px solid #dadada"></div>
<div class="t" style="left:458.5px;top:133.9px">0</div>
<div class="t" style="left:398.7px;top:146.4px">Origin</div>
<div class="inp" style="left:456.2px;top:145.3px;width:57.4px;height:11.7px;border-color:#ececec"></div>
<div class="t" style="left:458px;top:146.4px">Centriod</div>
<svg class="a" style="left:507px;top:149.5px" width="5" height="4" viewBox="0 0 5 4"><path d="M0.6 1 L2.5 2.8 L4.4 1" fill="none" stroke="#a0a0a0" stroke-width="0.6"/></svg>
<div class="t" style="left:398.7px;top:160.1px">Target</div>
<div class="inp" style="left:456.2px;top:159.2px;width:57.4px;height:11.6px;border-color:#ececec"></div>
<div class="t" style="left:458px;top:160.1px">Centriod</div>
<svg class="a" style="left:507px;top:163.3px" width="5" height="4" viewBox="0 0 5 4"><path d="M0.6 1 L2.5 2.8 L4.4 1" fill="none" stroke="#a0a0a0" stroke-width="0.6"/></svg>
<div class="btn" style="left:399.8px;top:172.5px;width:54.3px;height:12.5px"></div>
<div class="t" style="left:419px;top:174px">Start</div>
<div class="btn" style="left:458.5px;top:172.5px;width:54.7px;height:12.5px"></div>
<div class="t" style="left:476.5px;top:174px">Reset</div>
<div class="t" style="left:398.5px;top:187.9px;font-size:7.25px">Sampling Points</div>
<div class="inp" style="left:456.2px;top:187.3px;width:57.4px;height:11.1px;border-color:#ececec"></div>
<div class="a" style="left:505.5px;top:187.30px;width:7.6px;height:11.20px;background:#e6e6e6;border:1px solid #dcdcdc"></div><svg class="a" style="left:505.5px;top:187.30px" width="8" height="11.20" viewBox="0 0 8 11.20"><path d="M2.1 4.30 L3.8 2.70 L5.5 4.30 Z M2.1 6.90 L3.8 8.50 L5.5 6.90 Z" fill="#1a1a1a"/></svg>
<div class="t" style="left:457.5px;top:187.9px">10000</div>
<div class="t" style="left:398.7px;top:200.1px">Lasts</div>
<div class="inp" style="left:457px;top:199.2px;width:56px;height:12.5px;border-color:#ececec"></div>
<div class="a" style="left:505.0px;top:199.30px;width:7.6px;height:12.20px;background:#e6e6e6;border:1px solid #dcdcdc"></div><svg class="a" style="left:505.0px;top:199.30px" width="8" height="12.20" viewBox="0 0 8 12.20"><path d="M2.1 4.80 L3.8 3.20 L5.5 4.80 Z M2.1 7.40 L3.8 9.00 L5.5 7.40 Z" fill="#1a1a1a"/></svg>
<div class="t" style="left:457.8px;top:200.1px">00:00:30</div>

<div class="a" style="left:399.3px;top:216.8px;width:114px;height:19px;border:1px solid #e2e2e2;border-bottom:none"></div>
<div class="a" style="left:402px;top:212px;width:15px;height:8px;background:#f0f0f0"></div>
<div class="t" style="left:403.4px;top:212.6px">Log</div>
<div class="a" style="left:399.3px;top:225.9px;width:6px;height:6px;border:1px solid #9a9a9a;background:#fff"></div>
<div class="inp" style="left:406.3px;top:223px;width:106.6px;height:12.2px;border-color:#ececec"></div>
<div class="t" style="left:407.5px;top:224.8px">v_dir.csv</div>
<div class="btn" style="left:400px;top:237px;width:32.2px;height:12.9px"></div>
<div class="t" style="left:406.5px;top:239.2px">Select</div>
<div class="btn" style="left:480.1px;top:237px;width:32.2px;height:12.9px"></div>
<div class="t" style="left:485px;top:239.2px">Export</div>
<div class="t" style="left:398.7px;top:252.8px">StartTime</div>
<div class="inp" style="left:430.9px;top:251.8px;width:82px;height:11px;border-color:#ececec"></div>
<div class="t" style="left:431.5px;top:252.8px">11-21 09:35:09</div>
<div class="t" style="left:398.7px;top:265.7px">EndTime</div>
<div class="inp" style="left:428px;top:264.1px;width:85px;height:12px;border-color:#ececec"></div>
<div class="t" style="left:429px;top:265.7px">11-21 09:35:32</div>

<div class="t" style="left:398.7px;top:314.7px">Focal/mm</div>
<div class="inp" style="left:432.4px;top:313.9px;width:80.5px;height:11.1px;border-color:#ececec"></div>
<div class="a" style="left:505.0px;top:313.90px;width:7.6px;height:11.20px;background:#e6e6e6;border:1px solid #dcdcdc"></div><svg class="a" style="left:505.0px;top:313.90px" width="8" height="11.20" viewBox="0 0 8 11.20"><path d="M2.1 4.30 L3.8 2.70 L5.5 4.30 Z M2.1 6.90 L3.8 8.50 L5.5 6.90 Z" fill="#1a1a1a"/></svg>
<div class="t" style="left:433px;top:314.7px">1.00</div>
<div class="a" style="left:397.2px;top:330.3px;width:359.8px;height:103.5px;background:#fff;overflow:hidden">
<div class="a" style="left:0;top:0;width:360px;height:14.2px;background:#87ceeb;border-bottom:1px solid #6a9aad"></div>
<div class="t" style="left:0.0px;top:2.6px;width:90.30000000000001px;text-align:center;font-size:7.2px">name</div>
<div class="t" style="left:90.30000000000001px;top:2.6px;width:90.0px;text-align:center;font-size:7.2px">X</div>
<div class="a" style="left:89.80000000000001px;top:0;width:1px;height:14.2px;background:#5c8ea0"></div>
<div class="a" style="left:89.80000000000001px;top:14.2px;width:1px;height:90px;background:#eeeeee"></div>
<div class="t" style="left:180.3px;top:2.6px;width:89.5px;text-align:center;font-size:7.2px">Y</div>
<div class="a" style="left:179.8px;top:0;width:1px;height:14.2px;background:#5c8ea0"></div>
<div class="a" style="left:179.8px;top:14.2px;width:1px;height:90px;background:#eeeeee"></div>
<div class="t" style="left:269.8px;top:2.6px;width:90px;text-align:center;font-size:7.2px">XY</div>
<div class="a" style="left:269.3px;top:0;width:1px;height:14.2px;background:#5c8ea0"></div>
<div class="a" style="left:269.3px;top:14.2px;width:1px;height:90px;background:#eeeeee"></div>
<div class="a" style="left:0;top:28.1px;width:360px;height:1px;background:#eeeeee"></div>
<div class="t" style="left:1.6px;top:17.20px;font-size:7.6px">current/um</div>
<div class="t" style="left:91.9px;top:17.20px;font-size:7.6px">0.00868122</div>
<div class="t" style="left:181.9px;top:17.20px;font-size:7.6px">0.00219402</div>
<div class="t" style="left:271.40000000000003px;top:17.20px;font-size:7.6px">0.00633156</div>
<div class="a" style="left:0;top:42.5px;width:360px;height:1px;background:#eeeeee"></div>
<div class="t" style="left:1.6px;top:31.60px;font-size:7.6px">max/um</div>
<div class="t" style="left:91.9px;top:31.60px;font-size:7.6px">0.106594</div>
<div class="t" style="left:181.9px;top:31.60px;font-size:7.6px">&#8211;0.115935</div>
<div class="t" style="left:271.40000000000003px;top:31.60px;font-size:7.6px">0.111363</div>
<div class="a" style="left:0;top:56.9px;width:360px;height:1px;background:#eeeeee"></div>
<div class="t" style="left:1.6px;top:46.00px;font-size:7.6px">average/um</div>
<div class="t" style="left:91.9px;top:46.00px;font-size:7.6px">0.000605324</div>
<div class="t" style="left:181.9px;top:46.00px;font-size:7.6px">&#8211;0.0335084</div>
<div class="t" style="left:271.40000000000003px;top:46.00px;font-size:7.6px">0.0236979</div>
<div class="a" style="left:0;top:71.30000000000001px;width:360px;height:1px;background:#eeeeee"></div>
<div class="t" style="left:1.6px;top:60.40px;font-size:7.6px">range/um</div>
<div class="t" style="left:91.9px;top:60.40px;font-size:7.6px">0.00147458</div>
<div class="t" style="left:181.9px;top:60.40px;font-size:7.6px">&#8211;0.034081</div>
<div class="t" style="left:271.40000000000003px;top:60.40px;font-size:7.6px">0.0241215</div>
<div class="a" style="left:0;top:85.7px;width:360px;height:1px;background:#eeeeee"></div>
<div class="t" style="left:1.6px;top:74.80px;font-size:7.6px">standard/um</div>
<div class="t" style="left:91.9px;top:74.80px;font-size:7.6px">0.0321323</div>
<div class="t" style="left:181.9px;top:74.80px;font-size:7.6px">0.0384354</div>
<div class="t" style="left:271.40000000000003px;top:74.80px;font-size:7.6px">0.0354244</div>
<div class="a" style="left:0;top:100.10000000000001px;width:360px;height:1px;background:#eeeeee"></div>
<div class="t" style="left:1.6px;top:89.20px;font-size:7.6px">meanSquare</div>
<div class="t" style="left:91.9px;top:89.20px;font-size:7.6px">0.032138</div>
<div class="t" style="left:181.9px;top:89.20px;font-size:7.6px">0.0509911</div>
<div class="t" style="left:271.40000000000003px;top:89.20px;font-size:7.6px">0.0426201</div>
</div>
<div class="a" style="left:396.8px;top:330px;width:1px;height:104px;background:#e6e6e6"></div>
<div class="a" style="left:397px;top:433.6px;width:369px;height:1px;background:#c8c8c8"></div>
<div class="a" style="left:757px;top:330.3px;width:8px;height:103.3px;background:#f4f4f4;border-right:1px solid #c8c8c8"></div>
<div class="a" style="left:759.7px;top:338.7px;width:2.9px;height:64.6px;background:#909090;border-radius:1px"></div>
<div class="a" style="left:0;top:438.3px;width:768px;height:10.7px;background:#f0f0f0"></div>
<div class="t" style="left:1.6px;top:439.3px">835x834</div>
<div class="t" style="left:46px;top:439.3px">X:1.335696e+03um,Y:3.374891e+02um I:0; 0.00%</div>
<div class="a" style="left:709px;top:442.3px;width:37.5px;height:2.5px;background:#e2e2e2;border-radius:1px"></div>
<div class="a" style="left:708.8px;top:440px;width:4.7px;height:6.8px;background:#1a72dc;border-radius:1px"></div>
<div class="a" style="left:747.4px;top:439.2px;width:20.6px;height:9.8px;background:#fff"></div>
<div class="t" style="left:755.5px;top:439.5px">0</div>
<svg class="a" style="left:518px;top:83.5px" width="247" height="243.5" viewBox="518 83.5 247 243.5">
<rect x="518" y="83.5" width="247" height="243.5" fill="#fff"/>
<line x1="577.80" y1="90.5" x2="577.80" y2="283" stroke="#ededed" stroke-width="0.8"/>
<line x1="609.55" y1="90.5" x2="609.55" y2="283" stroke="#ededed" stroke-width="0.8"/>
<line x1="641.30" y1="90.5" x2="641.30" y2="283" stroke="#ededed" stroke-width="0.8"/>
<line x1="673.05" y1="90.5" x2="673.05" y2="283" stroke="#ededed" stroke-width="0.8"/>
<line x1="704.80" y1="90.5" x2="704.80" y2="283" stroke="#ededed" stroke-width="0.8"/>
<line x1="736.55" y1="90.5" x2="736.55" y2="283" stroke="#ededed" stroke-width="0.8"/>
<line x1="557" y1="101.00" x2="758" y2="101.00" stroke="#ededed" stroke-width="0.8"/>
<line x1="557" y1="132.10" x2="758" y2="132.10" stroke="#ededed" stroke-width="0.8"/>
<line x1="557" y1="163.20" x2="758" y2="163.20" stroke="#ededed" stroke-width="0.8"/>
<line x1="557" y1="194.30" x2="758" y2="194.30" stroke="#ededed" stroke-width="0.8"/>
<line x1="557" y1="225.40" x2="758" y2="225.40" stroke="#ededed" stroke-width="0.8"/>
<line x1="557" y1="256.50" x2="758" y2="256.50" stroke="#ededed" stroke-width="0.8"/>
<rect x="556.1" y="90.1" width="2" height="193.5" fill="#d2d2d2"/>
<line x1="556.5" y1="283.3" x2="758" y2="283.3" stroke="#8a8a8a" stroke-width="0.9"/>
<line x1="558" y1="94.78" x2="559.2" y2="94.78" stroke="#555" stroke-width="0.8"/>
<line x1="558" y1="101.00" x2="560" y2="101.00" stroke="#555" stroke-width="0.8"/>
<line x1="558" y1="107.22" x2="559.2" y2="107.22" stroke="#555" stroke-width="0.8"/>
<line x1="558" y1="113.44" x2="559.2" y2="113.44" stroke="#555" stroke-width="0.8"/>
<line x1="558" y1="119.66" x2="559.2" y2="119.66" stroke="#555" stroke-width="0.8"/>
<line x1="558" y1="125.88" x2="559.2" y2="125.88" stroke="#555" stroke-width="0.8"/>
<line x1="558" y1="132.10" x2="560" y2="132.10" stroke="#555" stroke-width="0.8"/>
<line x1="558" y1="138.32" x2="559.2" y2="138.32" stroke="#555" stroke-width="0.8"/>
<line x1="558" y1="144.54" x2="559.2" y2="144.54" stroke="#555" stroke-width="0.8"/>
<line x1="558" y1="150.76" x2="559.2" y2="150.76" stroke="#555" stroke-width="0.8"/>
<line x1="558" y1="156.98" x2="559.2" y2="156.98" stroke="#555" stroke-width="0.8"/>
<line x1="558" y1="163.20" x2="560" y2="163.20" stroke="#555" stroke-width="0.8"/>
<line x1="558" y1="169.42" x2="559.2" y2="169.42" stroke="#555" stroke-width="0.8"/>
<line x1="558" y1="175.64" x2="559.2" y2="175.64" stroke="#555" stroke-width="0.8"/>
<line x1="558" y1="181.86" x2="559.2" y2="181.86" stroke="#555" stroke-width="0.8"/>
<line x1="558" y1="188.08" x2="559.2" y2="188.08" stroke="#555" stroke-width="0.8"/>
<line x1="558" y1="194.30" x2="560" y2="194.30" stroke="#555" stroke-width="0.8"/>
<line x1="558" y1="200.52" x2="559.2" y2="200.52" stroke="#555" stroke-width="0.8"/>
<line x1="558" y1="206.74" x2="559.2" y2="206.74" stroke="#555" stroke-width="0.8"/>
<line x1="558" y1="212.96" x2="559.2" y2="212.96" stroke="#555" stroke-width="0.8"/>
<line x1="558" y1="219.18" x2="559.2" y2="219.18" stroke="#555" stroke-width="0.8"/>
<line x1="558" y1="225.40" x2="560" y2="225.40" stroke="#555" stroke-width="0.8"/>
<line x1="558" y1="231.62" x2="559.2" y2="231.62" stroke="#555" stroke-width="0.8"/>
<line x1="558" y1="237.84" x2="559.2" y2="237.84" stroke="#555" stroke-width="0.8"/>
<line x1="558" y1="244.06" x2="559.2" y2="244.06" stroke="#555" stroke-width="0.8"/>
<line x1="558" y1="250.28" x2="559.2" y2="250.28" stroke="#555" stroke-width="0.8"/>
<line x1="558" y1="256.50" x2="560" y2="256.50" stroke="#555" stroke-width="0.8"/>
<line x1="558" y1="262.72" x2="559.2" y2="262.72" stroke="#555" stroke-width="0.8"/>
<line x1="558" y1="268.94" x2="559.2" y2="268.94" stroke="#555" stroke-width="0.8"/>
<line x1="558" y1="275.16" x2="559.2" y2="275.16" stroke="#555" stroke-width="0.8"/>
<line x1="558" y1="281.38" x2="559.2" y2="281.38" stroke="#555" stroke-width="0.8"/>
<line x1="558.75" y1="283" x2="558.75" y2="281.8" stroke="#555" stroke-width="0.8"/>
<line x1="565.10" y1="283" x2="565.10" y2="281.8" stroke="#555" stroke-width="0.8"/>
<line x1="571.45" y1="283" x2="571.45" y2="281.8" stroke="#555" stroke-width="0.8"/>
<line x1="577.80" y1="283" x2="577.80" y2="281" stroke="#555" stroke-width="0.8"/>
<line x1="584.15" y1="283" x2="584.15" y2="281.8" stroke="#555" stroke-width="0.8"/>
<line x1="590.50" y1="283" x2="590.50" y2="281.8" stroke="#555" stroke-width="0.8"/>
<line x1="596.85" y1="283" x2="596.85" y2="281.8" stroke="#555" stroke-width="0.8"/>
<line x1="603.20" y1="283" x2="603.20" y2="281.8" stroke="#555" stroke-width="0.8"/>
<line x1="609.55" y1="283" x2="609.55" y2="281" stroke="#555" stroke-width="0.8"/>
<line x1="615.90" y1="283" x2="615.90" y2="281.8" stroke="#555" stroke-width="0.8"/>
<line x1="622.25" y1="283" x2="622.25" y2="281.8" stroke="#555" stroke-width="0.8"/>
<line x1="628.60" y1="283" x2="628.60" y2="281.8" stroke="#555" stroke-width="0.8"/>
<line x1="634.95" y1="283" x2="634.95" y2="281.8" stroke="#555" stroke-width="0.8"/>
<line x1="641.30" y1="283" x2="641.30" y2="281" stroke="#555" stroke-width="0.8"/>
<line x1="647.65" y1="283" x2="647.65" y2="281.8" stroke="#555" stroke-width="0.8"/>
<line x1="654.00" y1="283" x2="654.00" y2="281.8" stroke="#555" stroke-width="0.8"/>
<line x1="660.35" y1="283" x2="660.35" y2="281.8" stroke="#555" stroke-width="0.8"/>
<line x1="666.70" y1="283" x2="666.70" y2="281.8" stroke="#555" stroke-width="0.8"/>
<line x1="673.05" y1="283" x2="673.05" y2="281" stroke="#555" stroke-width="0.8"/>
<line x1="679.40" y1="283" x2="679.40" y2="281.8" stroke="#555" stroke-width="0.8"/>
<line x1="685.75" y1="283" x2="685.75" y2="281.8" stroke="#555" stroke-width="0.8"/>
<line x1="692.10" y1="283" x2="692.10" y2="281.8" stroke="#555" stroke-width="0.8"/>
<line x1="698.45" y1="283" x2="698.45" y2="281.8" stroke="#555" stroke-width="0.8"/>
<line x1="704.80" y1="283" x2="704.80" y2="281" stroke="#555" stroke-width="0.8"/>
<line x1="711.15" y1="283" x2="711.15" y2="281.8" stroke="#555" stroke-width="0.8"/>
<line x1="717.50" y1="283" x2="717.50" y2="281.8" stroke="#555" stroke-width="0.8"/>
<line x1="723.85" y1="283" x2="723.85" y2="281.8" stroke="#555" stroke-width="0.8"/>
<line x1="730.20" y1="283" x2="730.20" y2="281.8" stroke="#555" stroke-width="0.8"/>
<line x1="736.55" y1="283" x2="736.55" y2="281" stroke="#555" stroke-width="0.8"/>
<line x1="742.90" y1="283" x2="742.90" y2="281.8" stroke="#555" stroke-width="0.8"/>
<line x1="749.25" y1="283" x2="749.25" y2="281.8" stroke="#555" stroke-width="0.8"/>
<line x1="755.60" y1="283" x2="755.60" y2="281.8" stroke="#555" stroke-width="0.8"/>
<text x="554" y="103.40" text-anchor="end" font-size="7" fill="#222">−0.15</text>
<text x="554" y="134.50" text-anchor="end" font-size="7" fill="#222">−0.1</text>
<text x="554" y="165.60" text-anchor="end" font-size="7" fill="#222">−0.05</text>
<text x="554" y="196.70" text-anchor="end" font-size="7" fill="#222">0</text>
<text x="554" y="227.80" text-anchor="end" font-size="7" fill="#222">0.05</text>
<text x="554" y="258.90" text-anchor="end" font-size="7" fill="#222">0.1</text>
<text x="576.80" y="292.3" text-anchor="middle" font-size="7" fill="#222">−0.1</text>
<text x="608.55" y="292.3" text-anchor="middle" font-size="7" fill="#222">−0.05</text>
<text x="641.30" y="292.3" text-anchor="middle" font-size="7" fill="#222">0</text>
<text x="673.05" y="292.3" text-anchor="middle" font-size="7" fill="#222">0.05</text>
<text x="704.80" y="292.3" text-anchor="middle" font-size="7" fill="#222">0.1</text>
<text x="736.55" y="292.3" text-anchor="middle" font-size="7" fill="#222">0.15</text>
<text x="657.5" y="303.7" text-anchor="middle" font-size="7" fill="#222">XoffSet</text>
<text transform="translate(528.4 186.3) rotate(-90)" x="0" y="0" text-anchor="middle" font-size="7" fill="#222">YoffSet</text>
<circle cx="660.5" cy="134.8" r="1.45" fill="none" stroke="#7a7aff" stroke-width="0.7"/>
<circle cx="656.3" cy="139.9" r="1.45" fill="none" stroke="#7a7aff" stroke-width="0.7"/>
<circle cx="615.2" cy="143.5" r="1.45" fill="none" stroke="#7a7aff" stroke-width="0.7"/>
<circle cx="647.7" cy="144.3" r="1.45" fill="none" stroke="#7a7aff" stroke-width="0.7"/>
<circle cx="618.5" cy="147.7" r="1.45" fill="none" stroke="#7a7aff" stroke-width="0.7"/>
<circle cx="643.4" cy="148.5" r="1.45" fill="none" stroke="#7a7aff" stroke-width="0.7"/>
<circle cx="631.3" cy="149.2" r="1.45" fill="none" stroke="#7a7aff" stroke-width="0.7"/>
<circle cx="653.8" cy="149.4" r="1.45" fill="none" stroke="#7a7aff" stroke-width="0.7"/>
<circle cx="640.8" cy="154.3" r="1.45" fill="none" stroke="#7a7aff" stroke-width="0.7"/>
<circle cx="639.0" cy="155.4" r="1.45" fill="none" stroke="#7a7aff" stroke-width="0.7"/>
<circle cx="660.5" cy="155.4" r="1.45" fill="none" stroke="#7a7aff" stroke-width="0.7"/>
<circle cx="626.5" cy="156.8" r="1.45" fill="none" stroke="#7a7aff" stroke-width="0.7"/>
<circle cx="626.5" cy="162.5" r="1.45" fill="none" stroke="#7a7aff" stroke-width="0.7"/>
<circle cx="642.5" cy="162.5" r="1.45" fill="none" stroke="#7a7aff" stroke-width="0.7"/>
<circle cx="631.1" cy="163.4" r="1.45" fill="none" stroke="#7a7aff" stroke-width="0.7"/>
<circle cx="629.5" cy="164.4" r="1.45" fill="none" stroke="#7a7aff" stroke-width="0.7"/>
<circle cx="611.3" cy="164.8" r="1.45" fill="none" stroke="#7a7aff" stroke-width="0.7"/>
<circle cx="630.0" cy="166.1" r="1.45" fill="none" stroke="#7a7aff" stroke-width="0.7"/>
<circle cx="643.0" cy="166.4" r="1.45" fill="none" stroke="#7a7aff" stroke-width="0.7"/>
<circle cx="611.7" cy="169.3" r="1.45" fill="none" stroke="#7a7aff" stroke-width="0.7"/>
<circle cx="653.7" cy="169.0" r="1.45" fill="none" stroke="#7a7aff" stroke-width="0.7"/>
<circle cx="616.4" cy="172.7" r="1.45" fill="none" stroke="#7a7aff" stroke-width="0.7"/>
<circle cx="617.0" cy="175.4" r="1.45" fill="none" stroke="#7a7aff" stroke-width="0.7"/>
<circle cx="635.7" cy="171.3" r="1.45" fill="none" stroke="#7a7aff" stroke-width="0.7"/>
<circle cx="646.4" cy="172.3" r="1.45" fill="none" stroke="#7a7aff" stroke-width="0.7"/>
<circle cx="628.1" cy="175.4" r="1.45" fill="none" stroke="#7a7aff" stroke-width="0.7"/>
<circle cx="605.4" cy="177.2" r="1.45" fill="none" stroke="#7a7aff" stroke-width="0.7"/>
<circle cx="642.4" cy="176.7" r="1.45" fill="none" stroke="#7a7aff" stroke-width="0.7"/>
<circle cx="642.4" cy="180.0" r="1.45" fill="none" stroke="#7a7aff" stroke-width="0.7"/>
<circle cx="667.8" cy="176.0" r="1.45" fill="none" stroke="#7a7aff" stroke-width="0.7"/>
<circle cx="663.8" cy="182.4" r="1.45" fill="none" stroke="#7a7aff" stroke-width="0.7"/>
<circle cx="628.1" cy="184.0" r="1.45" fill="none" stroke="#7a7aff" stroke-width="0.7"/>
<circle cx="634.4" cy="184.3" r="1.45" fill="none" stroke="#7a7aff" stroke-width="0.7"/>
<circle cx="652.4" cy="184.3" r="1.45" fill="none" stroke="#7a7aff" stroke-width="0.7"/>
<circle cx="664.2" cy="191.4" r="1.45" fill="none" stroke="#7a7aff" stroke-width="0.7"/>
<circle cx="665.5" cy="192.7" r="1.45" fill="none" stroke="#7a7aff" stroke-width="0.7"/>
<circle cx="627.0" cy="195.4" r="1.45" fill="none" stroke="#7a7aff" stroke-width="0.7"/>
<circle cx="637.5" cy="197.4" r="1.45" fill="none" stroke="#7a7aff" stroke-width="0.7"/>
<circle cx="665.5" cy="195.8" r="1.45" fill="none" stroke="#7a7aff" stroke-width="0.7"/>
<circle cx="667.4" cy="198.0" r="1.45" fill="none" stroke="#7a7aff" stroke-width="0.7"/>
<circle cx="626.3" cy="204.8" r="1.45" fill="none" stroke="#7a7aff" stroke-width="0.7"/>
<circle cx="628.3" cy="212.4" r="1.45" fill="none" stroke="#7a7aff" stroke-width="0.7"/>
<circle cx="637.1" cy="213.0" r="1.45" fill="none" stroke="#7a7aff" stroke-width="0.7"/>
<circle cx="653.4" cy="222.4" r="1.45" fill="none" stroke="#7a7aff" stroke-width="0.7"/>
<circle cx="613.3" cy="251.1" r="1.45" fill="none" stroke="#7a7aff" stroke-width="0.7"/>
<circle cx="682.5" cy="122.2" r="1.45" fill="none" stroke="#7a7aff" stroke-width="0.7"/>
<circle cx="709.6" cy="150.1" r="1.45" fill="none" stroke="#7a7aff" stroke-width="0.7"/>
<circle cx="678.3" cy="171.7" r="1.45" fill="none" stroke="#7a7aff" stroke-width="0.7"/>
<circle cx="641.7" cy="173.9" r="1.9" fill="#ffc020"/>
<circle cx="633.2" cy="197.9" r="1.4" fill="#12e012"/>
<circle cx="647" cy="196.2" r="1.4" fill="#ff1010"/>
<circle cx="528.4" cy="318.8" r="1.3" fill="none" stroke="#8a8aff" stroke-width="0.55"/>
<text x="539.2" y="321.9" font-size="7" fill="#222">samples</text>
<circle cx="589.9" cy="318.8" r="1.2" fill="#ff1010"/>
<text x="600.2" y="321.9" font-size="7" fill="#222">last</text>
<circle cx="651" cy="318.8" r="1.2" fill="#12e012"/>
<text x="661.6" y="321.9" font-size="7" fill="#222">first</text>
<circle cx="712.6" cy="318.8" r="1.3" fill="#ffc020"/>
<text x="722.5" y="321.9" font-size="7" fill="#222">mean</text>
</svg>

<svg class="a" style="left:396px;top:278px" width="120" height="36" viewBox="396 278 120 36" font-family="Liberation Sans" font-weight="bold">
<rect x="399.3" y="286.7" width="23.4" height="11.6" fill="#fff" stroke="#98cc98" stroke-width="0.9"/>
<rect x="422.7" y="289.6" width="5" height="5.8" fill="#fff" stroke="#98cc98" stroke-width="0.8"/>
<text x="402" y="294.6" font-size="6" fill="#111">Laser</text>
<text x="428.6" y="291" font-size="6" fill="#111">&#952;</text>
<line x1="445.5" y1="291.6" x2="470" y2="291.2" stroke="#c8c8c8" stroke-width="0.6" stroke-dasharray="1.2,0.8"/>
<line x1="427.8" y1="292.2" x2="469" y2="289" stroke="#e89a60" stroke-width="1"/>
<path d="M472 288.7 L467.8 287.2 L468.3 290.6 Z" fill="#d07830"/>
<ellipse cx="445.3" cy="292.4" rx="1.3" ry="8.6" fill="#78acdc"/>
<text x="437.9" y="283.2" font-size="5.6" fill="#222">Lens</text>
<text x="452" y="287.8" font-size="6" fill="#222">&#916; &#952;</text>
<rect x="472" y="283.6" width="1.8" height="16.6" fill="#b0d0ec"/>
<text x="474.6" y="287.8" font-size="5.7" fill="#222">Beam Center</text>
<text x="477" y="291.8" font-size="4.4" fill="#333">&#916;A</text>
<text x="474.2" y="296.6" font-size="5.8" fill="#111">0</text>
<text x="486.6" y="295.8" font-size="5.6" fill="#333">Z</text>
<g stroke="#8a8a8a" stroke-width="0.6" fill="none">
<line x1="428" y1="292.5" x2="428" y2="311.2"/>
<line x1="445.3" y1="301" x2="445.3" y2="308"/>
<line x1="470.3" y1="292" x2="470.3" y2="311.2"/>
<line x1="445.3" y1="303.4" x2="470.3" y2="303.4"/>
<line x1="428" y1="310.2" x2="470.3" y2="310.2"/>
</g>
<text x="453.3" y="302.6" font-size="5.6" fill="#222">f</text>
<text x="436.5" y="310" font-size="5.6" fill="#222">d</text>
</svg>
<svg class="a" style="left:339.0px;top:33.80px" width="6" height="10" viewBox="0 0 6 10"><path d="M1.7 3.0 L3 1.7 L4.3 3.0 Z M1.7 7.0 L3 8.3 L4.3 7.0 Z" fill="#444" stroke="#444" stroke-width="0.4"/></svg>
<svg class="a" style="left:339.0px;top:49.00px" width="6" height="10" viewBox="0 0 6 10"><path d="M1.7 3.0 L3 1.7 L4.3 3.0 Z M1.7 7.0 L3 8.3 L4.3 7.0 Z" fill="#444" stroke="#444" stroke-width="0.4"/></svg>
<svg class="a" style="left:497.5px;top:49.00px" width="6" height="10" viewBox="0 0 6 10"><path d="M1.7 3.0 L3 1.7 L4.3 3.0 Z M1.7 7.0 L3 8.3 L4.3 7.0 Z" fill="#444" stroke="#444" stroke-width="0.4"/></svg>
<svg class="a" style="left:648.8px;top:33.80px" width="6" height="10" viewBox="0 0 6 10"><path d="M1.7 3.0 L3 1.7 L4.3 3.0 Z M1.7 7.0 L3 8.3 L4.3 7.0 Z" fill="#444" stroke="#444" stroke-width="0.4"/></svg>
<svg class="a" style="left:648.8px;top:49.20px" width="6" height="10" viewBox="0 0 6 10"><path d="M1.7 3.0 L3 1.7 L4.3 3.0 Z M1.7 7.0 L3 8.3 L4.3 7.0 Z" fill="#444" stroke="#444" stroke-width="0.4"/></svg>
<svg class="a" style="left:498px;top:37.5px" width="5" height="4" viewBox="0 0 5 4"><path d="M0.6 1 L2.5 2.8 L4.4 1" fill="none" stroke="#a0a0a0" stroke-width="0.6"/></svg>
<svg class="a" style="left:563px;top:45.3px" width="5" height="4" viewBox="0 0 5 4"><path d="M0.6 1 L2.5 2.8 L4.4 1" fill="none" stroke="#a0a0a0" stroke-width="0.6"/></svg>
</body></html>
